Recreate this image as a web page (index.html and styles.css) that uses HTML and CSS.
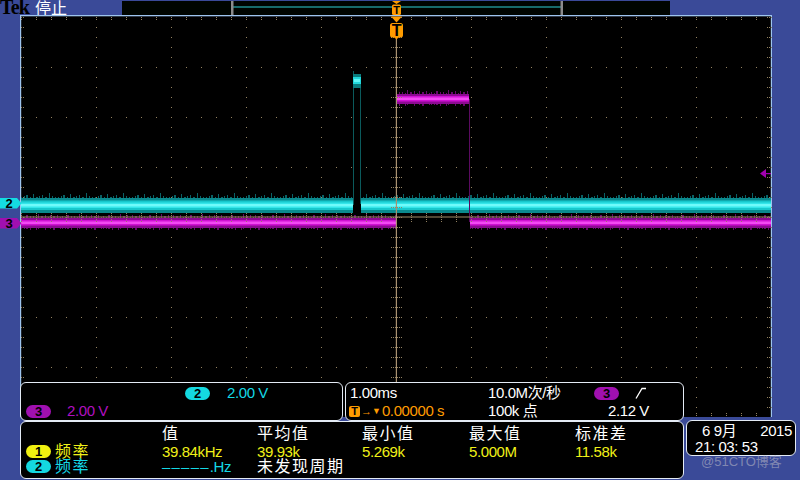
FILE: index.html
```html
<!DOCTYPE html>
<html lang="zh">
<head>
<meta charset="utf-8">
<title>Tek 停止</title>
<link rel="stylesheet" href="styles.css">
</head>
<body>
<div class="screen">
  <header class="topbar">
    <span class="brand">Tek</span>
    <span class="state">停止</span>
    <div class="record">
      <svg width="548" height="14" viewBox="122 1 548 14">
        <rect x="233" y="6.5" width="328" height="1" fill="#2fd2d6"/>
        <rect x="231" y="1" width="2.5" height="14" fill="#8c8c8c"/>
        <rect x="560.5" y="1" width="2.5" height="14" fill="#8c8c8c"/>
        <polygon points="392,1 401,1 396.5,4" fill="#ff9c00"/>
        <rect x="392" y="4.5" width="9" height="10.5" rx="1.5" fill="#ff9c00"/>
        <text x="396.5" y="13.5" class="svgt" font-size="11" font-weight="bold" text-anchor="middle" fill="#000">T</text>
      </svg>
    </div>
  </header>

  <div class="display">
    <svg class="scope" width="800" height="402" viewBox="0 15 800 402">
      <defs>
        <pattern id="colDots" x="21" y="17" width="75" height="10" patternUnits="userSpaceOnUse"><rect width="1" height="1" fill="#948260"/></pattern>
        <pattern id="rowDots" x="21" y="17" width="15" height="50" patternUnits="userSpaceOnUse"><rect width="1" height="1" fill="#948260"/></pattern>
        <pattern id="hTick" x="21" y="17" width="15" height="2" patternUnits="userSpaceOnUse"><rect width="1" height="1" fill="#948260"/></pattern>
        <pattern id="vTick" x="21" y="17" width="2" height="10" patternUnits="userSpaceOnUse"><rect width="1" height="1" fill="#948260"/></pattern>
        <pattern id="cyNoise" x="21" y="190" width="37" height="30" patternUnits="userSpaceOnUse">
          <g fill="#0a6266">
            <rect x="0" y="7" width="1" height="15"/>
            <rect x="3" y="6" width="1" height="16"/>
            <rect x="5" y="5" width="2" height="14"/>
            <rect x="9" y="7" width="1" height="16"/>
            <rect x="12" y="4" width="1" height="17"/>
            <rect x="15" y="7" width="2" height="15"/>
            <rect x="18" y="6" width="1" height="14"/>
            <rect x="21" y="5" width="1" height="17"/>
            <rect x="24" y="7" width="2" height="16"/>
            <rect x="28" y="3" width="1" height="18"/>
            <rect x="31" y="6" width="1" height="16"/>
            <rect x="34" y="7" width="1" height="15"/>
          </g>
        </pattern>
        <pattern id="mgNoise" x="21" y="210" width="41" height="26" patternUnits="userSpaceOnUse">
          <g fill="#640a6a">
            <rect x="0" y="6" width="1" height="13"/>
            <rect x="3" y="7" width="1" height="12"/>
            <rect x="5" y="5" width="2" height="14"/>
            <rect x="9" y="6" width="1" height="14"/>
            <rect x="12" y="6" width="1" height="12"/>
            <rect x="15" y="7" width="1" height="13"/>
            <rect x="17" y="4" width="1" height="15"/>
            <rect x="20" y="6" width="2" height="12"/>
            <rect x="24" y="5" width="1" height="15"/>
            <rect x="27" y="7" width="1" height="11"/>
            <rect x="29" y="5" width="1" height="14"/>
            <rect x="32" y="6" width="2" height="14"/>
            <rect x="36" y="5" width="1" height="13"/>
            <rect x="39" y="7" width="1" height="12"/>
          </g>
        </pattern>
      </defs>

      <!-- plot area -->
      <rect x="21" y="16" width="750" height="401" fill="#000"/>
      <rect x="20" y="15" width="752" height="1.3" fill="#9ec4ee"/>
      <rect x="20" y="15" width="1.2" height="402" fill="#9ec4ee"/>
      <rect x="770.8" y="15" width="1.2" height="402" fill="#9ec4ee"/>

      <!-- graticule -->
      <rect x="21" y="17" width="751" height="400" fill="url(#colDots)"/>
      <rect x="21" y="17" width="751" height="400" fill="url(#rowDots)"/>
      <rect x="21" y="17" width="750" height="3" fill="url(#hTick)"/>
      <rect x="21" y="413" width="750" height="3" fill="url(#hTick)"/>
      <rect x="21" y="17" width="3" height="400" fill="url(#vTick)"/>
      <rect x="767" y="17" width="4" height="400" fill="url(#vTick)"/>

      <!-- channel 2 (cyan) -->
      <g>
        <rect x="21" y="190" width="332" height="30" fill="url(#cyNoise)"/>
        <rect x="361" y="190" width="410" height="30" fill="url(#cyNoise)"/>
        <rect x="21" y="198" width="332" height="15" fill="#0b8a8e"/>
        <rect x="361" y="198" width="410" height="15" fill="#0b8a8e"/>
        <rect x="21" y="200.5" width="332" height="9.5" fill="#17c8cc"/>
        <rect x="361" y="200.5" width="410" height="9.5" fill="#17c8cc"/>
        <rect x="21" y="202.5" width="332" height="5.5" fill="#34e6ea"/>
        <rect x="361" y="202.5" width="410" height="5.5" fill="#34e6ea"/>
        <rect x="21" y="204" width="332" height="2.5" fill="#70fafa"/>
        <rect x="361" y="204" width="410" height="2.5" fill="#70fafa"/>
        <rect x="353" y="71" width="1" height="134" fill="#0b5a5c"/>
        <rect x="360" y="84" width="1" height="120" fill="#0b5a5c"/>
        <rect x="353" y="74" width="8" height="14" fill="#0b7c7e"/>
        <rect x="353" y="77" width="8" height="7" fill="#22d8dc"/>
        <rect x="354" y="79" width="6" height="3" fill="#60f6f6"/>
      </g>

      <!-- channel 3 (magenta) -->
      <g>
        <rect x="21" y="210" width="375" height="26" fill="url(#mgNoise)"/>
        <rect x="470" y="210" width="301" height="26" fill="url(#mgNoise)"/>
        <rect x="21" y="218" width="375" height="10" fill="#8c0a92"/>
        <rect x="470" y="218" width="301" height="10" fill="#8c0a92"/>
        <rect x="21" y="220" width="375" height="5.5" fill="#d010d4"/>
        <rect x="470" y="220" width="301" height="5.5" fill="#d010d4"/>
        <rect x="21" y="221.5" width="375" height="2.5" fill="#f24af2"/>
        <rect x="470" y="221.5" width="301" height="2.5" fill="#f24af2"/>
        <g transform="translate(0,-124)">
          <rect x="397" y="210" width="72" height="26" fill="url(#mgNoise)"/>
          <rect x="397" y="218" width="72" height="10" fill="#8c0a92"/>
          <rect x="397" y="220" width="72" height="5.5" fill="#d010d4"/>
          <rect x="397" y="221.5" width="72" height="2.5" fill="#f24af2"/>
        </g>
        <rect x="469" y="99" width="1" height="123" fill="#5a0a60"/>
      </g>

      <!-- centre cross -->
      <rect x="21" y="216.5" width="750" height="1" fill="#a08c68"/>
      <rect x="21" y="213" width="750" height="9" fill="url(#hTick)"/>
      <rect x="391" y="17" width="11" height="400" fill="url(#vTick)"/>
      <rect x="395.8" y="38" width="1.2" height="379" fill="#a89070"/>

      <!-- trigger position marker -->
      <polygon points="391,16.5 402,16.5 396.5,22.5" fill="#ff9c00"/>
      <rect x="390" y="23" width="13" height="14.5" rx="2.5" fill="#ff9c00"/>
      <polygon points="394,37 399,37 396.5,39.5" fill="#ff9c00"/>
      <text x="396.5" y="35.5" class="svgt" font-size="16" font-weight="bold" text-anchor="middle" fill="#000">T</text>

      <!-- trigger level marker -->
      <polygon points="760,173.5 766,169 766,178" fill="#a000b0"/>
      <rect x="766" y="173" width="5" height="1.2" fill="#a000b0"/>

      <!-- channel markers -->
      <path d="M0,198 H17 L21.5,203.2 L17,208.5 H0 Z" fill="#14dce2"/>
      <text x="9" y="207.6" class="svgt" font-size="13" font-weight="bold" text-anchor="middle" fill="#000">2</text>
      <path d="M0,218 H17 L21.5,223.3 L17,228.6 H0 Z" fill="#a010b0"/>
      <text x="9" y="227.7" class="svgt" font-size="13" font-weight="bold" text-anchor="middle" fill="#000">3</text>
    </svg>

    <div class="readouts">
      <section class="panel vert">
        <div class="row r-ch2"><span class="pill cyan-bg">2</span><span class="cyan">2.00 V</span></div>
        <div class="row r-ch3"><span class="pill mag-bg">3</span><span class="mag">2.00 V</span></div>
      </section>
      <section class="panel horiz">
        <span>1.00ms</span>
        <span>10.0M次/秒</span>
        <span class="trig"><span class="pill mag-bg">3</span><svg class="slope" width="12" height="12" viewBox="0 0 12 12"><polyline points="1,11.5 7,1.5 11,1.5" fill="none" stroke="#fff" stroke-width="1.3"/></svg></span>
        <span class="orange pos"><span class="tbox">T</span><span class="arrow">→</span><span class="tri">▼</span><span>0.00000 s</span></span>
        <span>100k 点</span>
        <span class="level">2.12 V</span>
      </section>
    </div>
  </div>

  <div class="bottom">
    <section class="panel meas">
      <span></span>
      <span class="mh">值</span>
      <span class="mh">平均值</span>
      <span class="mh">最小值</span>
      <span class="mh">最大值</span>
      <span class="mh">标准差</span>

      <span class="name yellow"><span class="pill yel-bg">1</span><span class="cjk">频率</span></span>
      <span class="yellow">39.84kHz</span>
      <span class="yellow">39.93k</span>
      <span class="yellow">5.269k</span>
      <span class="yellow">5.000M</span>
      <span class="yellow">11.58k</span>

      <span class="name cyan"><span class="pill cyan-bg">2</span><span class="cjk">频率</span></span>
      <span class="cyan"><span class="dashes">–––––</span>.Hz</span>
      <span class="cjk wide">未发现周期</span>
    </section>
    <section class="panel clock">
      <div class="date"><span>6 9月</span><span>2015</span></div>
      <div class="time">21: 03: 53</div>
    </section>
  </div>

  <span class="watermark">@51CTO博客</span>
</div>
</body>
</html>
```

FILE: styles.css
```css
* {
  box-sizing: border-box;
  margin: 0;
  padding: 0;
}

html, body {
  width: 800px;
  height: 480px;
  overflow: hidden;
}

body {
  background: #3a4a98;
  font-family: "Liberation Sans", "Noto Sans CJK SC", sans-serif;
  font-size: 15px;
  color: #fff;
  letter-spacing: -0.4px;
}

.svgt {
  font-family: "Liberation Sans", sans-serif;
}

.screen {
  position: relative;
  width: 800px;
  height: 480px;
}

/* ---------- top bar ---------- */
.topbar {
  display: grid;
  grid-template-columns: 35px 87px 548px;
  height: 15px;
}

.brand {
  font-family: "Liberation Serif", serif;
  font-weight: bold;
  font-size: 20px;
  line-height: 15px;
  color: #000;
  letter-spacing: -0.8px;
}

.state {
  font-family: "Noto Sans CJK SC", sans-serif;
  font-size: 16px;
  line-height: 15px;
  color: #fff;
  letter-spacing: 0;
}

.record {
  margin-top: 1px;
  height: 14px;
  background: #000500;
}

.record svg,
.scope {
  display: block;
}

/* ---------- display ---------- */
.display {
  position: relative;
  height: 402px;
}

.readouts {
  position: absolute;
  left: 20px;
  top: 367px;
  display: flex;
  gap: 2px;
}

.panel {
  background: #000;
  border: 1px solid #e4ebf5;
  border-radius: 6px;
}

.vert {
  width: 323px;
  height: 39px;
  padding-top: 1px;
}

.row {
  display: flex;
  align-items: center;
  height: 18px;
  line-height: 18px;
}

.r-ch2 {
  padding-left: 164px;
  gap: 17px;
}

.r-ch3 {
  padding-left: 5px;
  gap: 16px;
}

.horiz {
  width: 339px;
  height: 39px;
  padding: 1px 0 0 4px;
  display: grid;
  grid-template-columns: 138px 106px 1fr;
  grid-auto-rows: 18px;
  line-height: 18px;
  align-items: center;
}

.trig {
  display: flex;
  align-items: center;
  gap: 16px;
}

.slope {
  display: block;
}

.pos {
  display: flex;
  align-items: center;
  margin-left: -1px;
}

.tbox {
  display: inline-block;
  width: 11px;
  height: 11px;
  border-radius: 2px;
  background: #ff9c00;
  color: #000;
  font-weight: bold;
  font-size: 11px;
  line-height: 11px;
  text-align: center;
  letter-spacing: 0;
}

.arrow {
  font-size: 11px;
  line-height: 11px;
  letter-spacing: 0;
  margin-left: 1px;
}

.tri {
  font-size: 9px;
  line-height: 9px;
  letter-spacing: 0;
  margin-right: 1px;
}

.level {
  padding-left: 14px;
}

/* ---------- pills ---------- */
.pill {
  display: inline-block;
  width: 25px;
  height: 13px;
  border-radius: 7px;
  color: #000;
  font-weight: bold;
  font-size: 13px;
  line-height: 13px;
  text-align: center;
  letter-spacing: 0;
  flex: none;
}

.cyan-bg { background: #14d8e0; }
.mag-bg { background: #a010b0; }
.yel-bg { background: #f0f010; }

.cyan { color: #14d8e6; }
.mag { color: #b010c0; }
.yellow { color: #f0f018; }
.orange { color: #ff9c00; }

/* ---------- bottom row ---------- */
.bottom {
  display: flex;
  align-items: flex-start;
  padding-left: 20px;
}

.meas {
  margin-top: 4px;
  width: 664px;
  height: 58px;
  padding: 2px 0 0 5px;
  display: grid;
  grid-template-columns: 136px 95px 105px 107px 106px 1fr;
  grid-template-rows: 20px 15px 15px;
  line-height: 15px;
}

.mh {
  font-size: 16px;
  line-height: 20px;
  letter-spacing: 1.5px;
}

.cjk {
  font-size: 16px;
  line-height: 15px;
  letter-spacing: 1.5px;
}

.name {
  display: flex;
  align-items: center;
  gap: 4px;
}

.dashes {
  letter-spacing: 1.2px;
}

.wide {
  grid-column: span 3;
}

.clock {
  margin-top: 3px;
  margin-left: 2px;
  width: 110px;
  height: 36px;
  padding-top: 2px;
  line-height: 16px;
}

.date {
  display: flex;
  justify-content: space-between;
  padding: 0 3px 0 15px;
}

.time {
  padding-left: 8px;
}

.watermark {
  position: absolute;
  left: 701px;
  top: 454px;
  font-size: 13px;
  line-height: 16px;
  color: rgba(190, 190, 200, 0.55);
  letter-spacing: 0;
}
```
